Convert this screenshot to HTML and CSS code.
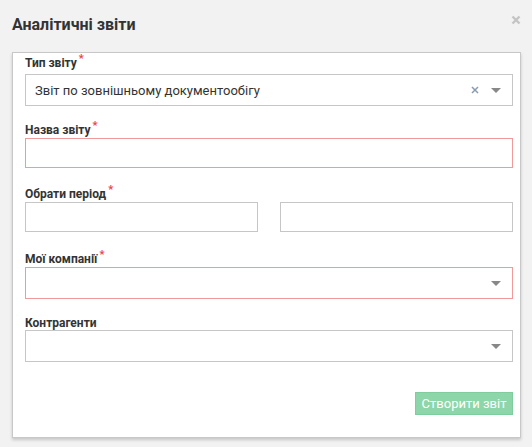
FILE: index.html
```html
<!DOCTYPE html>
<html lang="uk">
<head>
<meta charset="utf-8">
<link rel="stylesheet" href="styles.css">
</head>
<body>
<div class="header">
  <h1 class="title">Аналітичні звіти</h1>
  <svg class="close" width="10" height="10" viewBox="0 0 10 10"><path d="M1.5 1.5 L8.5 8.5 M8.5 1.5 L1.5 8.5" stroke="#c4c4c4" stroke-width="2.4" stroke-linecap="butt"/></svg>
</div>
<div class="panel">
  <div class="group first">
    <label class="label">Тип звіту<span class="req">*</span></label>
    <div class="field select tall">
      <span class="value">Звіт по зовнішньому документообігу</span>
      <svg class="clear" width="8" height="8" viewBox="0 0 8 8"><path d="M1 1 L7 7 M7 1 L1 7" stroke="#8a9bb0" stroke-width="1.5"/></svg>
      <span class="arrow"></span>
    </div>
  </div>
  <div class="group g-name">
    <label class="label">Назва звіту<span class="req">*</span></label>
    <div class="field error"></div>
  </div>
  <div class="group g-period">
    <label class="label">Обрати період<span class="req">*</span></label>
    <div class="dates">
      <div class="field"></div>
      <div class="field"></div>
    </div>
  </div>
  <div class="group g-companies">
    <label class="label">Мої компанії<span class="req">*</span></label>
    <div class="field select tall error"><span class="arrow"></span></div>
  </div>
  <div class="group g-contra">
    <label class="label">Контрагенти</label>
    <div class="field select tall"><span class="arrow"></span></div>
  </div>
  <div class="footer">
    <button class="btn">Створити звіт</button>
  </div>
</div>
</body>
</html>
```
FILE: styles.css
```css
html, body {
  margin: 0;
  padding: 0;
}
body {
  background: #f2f2f2;
  font-family: Roboto, "Liberation Sans", sans-serif;
  color: #333;
  width: 532px;
  height: 447px;
  overflow: hidden;
}
.header {
  height: 52px;
  display: flex;
  justify-content: space-between;
  align-items: flex-start;
  padding: 0 11px 0 12px;
  box-sizing: border-box;
}
.title {
  margin: 15px 0 0;
  font-size: 16px;
  line-height: 20px;
  font-weight: 700;
  color: #333;
}
.close {
  margin-top: 15px;
}
.panel {
  margin-left: 12px;
  width: 509px;
  box-sizing: border-box;
  background: #fff;
  border: 1px solid #c8c8c8;
  box-shadow: 0 2px 3px rgba(0,0,0,0.18);
  padding: 3px 7px 22px 12px;
}
.group {
  display: flex;
  flex-direction: column;
}
.g-name {
  margin-top: 17px;
}
.g-period {
  margin-top: 19px;
}
.g-companies {
  margin-top: 20px;
}
.g-contra {
  margin-top: 17px;
}
.group.first .label {
  margin-bottom: 3px;
}
.label {
  font-size: 12px;
  line-height: 14px;
  font-weight: 700;
  color: #333;
  display: block;
}
.req {
  color: #e8414f;
  font-size: 11px;
  position: relative;
  top: -5px;
  margin-left: 2px;
}
.field {
  height: 30px;
  border: 1px solid #c6c6c6;
  box-sizing: border-box;
  background: #fff;
}
.field.tall {
  height: 32px;
}
.field.error {
  border-color: #f29a9a;
}
.select {
  display: flex;
  align-items: center;
  padding: 0 11px 0 9px;
}
.value {
  flex: 1;
  font-size: 13px;
  color: #333;
}
.clear {
  margin-right: 12px;
}
.arrow {
  margin-left: auto;
  width: 0;
  height: 0;
  border-left: 5px solid transparent;
  border-right: 5px solid transparent;
  border-top: 5px solid #888;
}
.dates {
  display: grid;
  grid-template-columns: 1fr 1fr;
  column-gap: 22px;
}
.footer {
  display: flex;
  justify-content: flex-end;
  margin-top: 30px;
}
.btn {
  width: 98px;
  height: 23px;
  border: 1px solid #7fcd9c;
  background: #8dd6a9;
  color: #fff;
  font-family: Roboto, "Liberation Sans", sans-serif;
  font-size: 13px;
  padding: 0;
}
```
